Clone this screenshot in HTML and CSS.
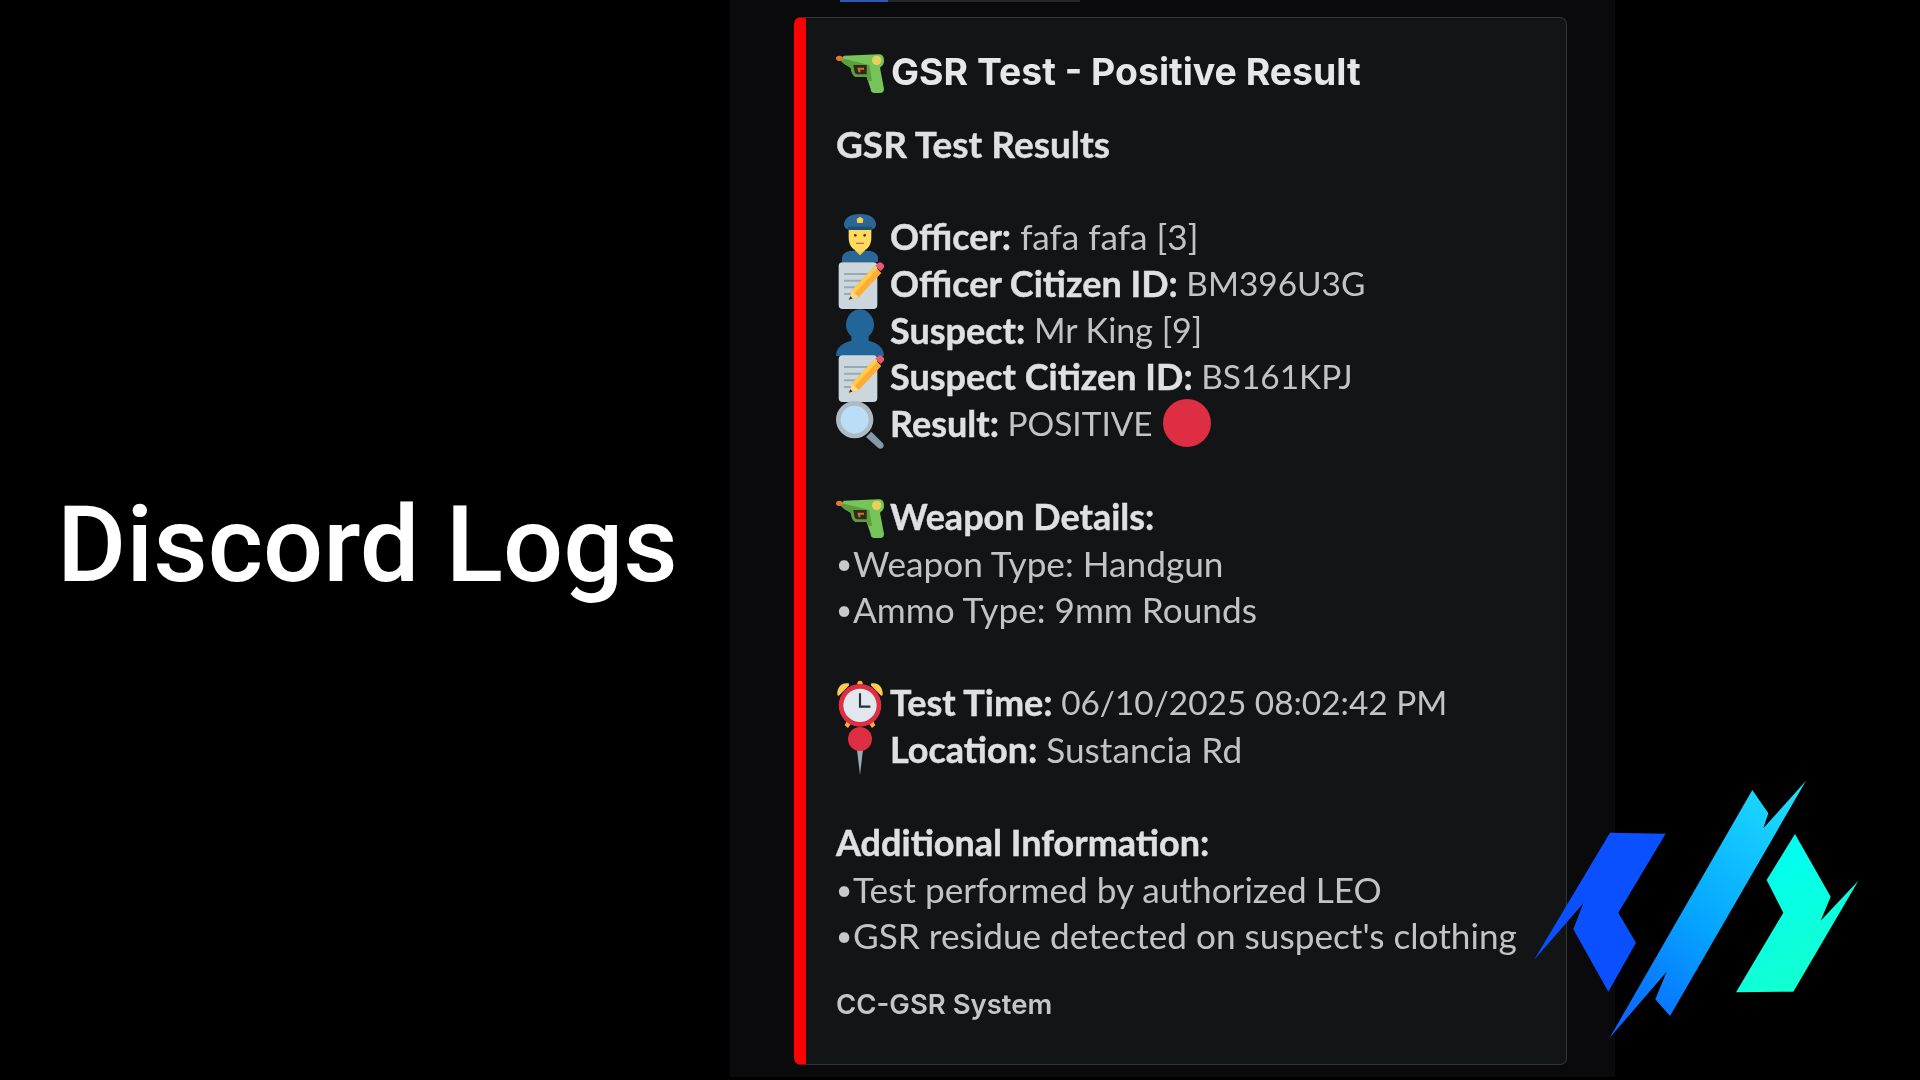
FILE: index.html
```html
<!DOCTYPE html>
<html lang="en">
<head>
<meta charset="utf-8">
<title>Discord Logs</title>
<link rel="stylesheet" href="styles.css">
</head>
<body>
<svg class="defs" width="0" height="0" aria-hidden="true">
  <symbol id="e-gun" viewBox="0 0 36 36">
    <path fill="#77c45a" d="M6 5L32 4C35 4 36 6 36 9C36 12 34 13 33 14L36 30C36 32 35 33 33 33L29 33C27 33 26 32 26 30L23 21L16 21C14 21 13 20 12 18L11 14L6 11L3 8Z"/>
    <path fill="#5c9e3b" d="M3 8L6 11L11 14L12 18C13 20 14 21 16 21L23 21L24 24L27 24L25 12L4 7Z"/>
    <ellipse cx="2.500" cy="7" rx="2.500" ry="2" fill="#e8762c"/>
    <circle cx="30.500" cy="8.500" r="3.500" fill="#e6d25a"/>
    <path fill="#33261c" d="M13 12h10v7h-7c-1 0-1.600-.5-2-1.500z"/>
    <path fill="#c9772b" d="M16 14h5v1.500h-3l.5 2H17z"/>
  </symbol>
  <symbol id="e-cop" viewBox="0 0 36 36">
    <path fill="#2a6797" d="M4.500 36v-3c0-3.500 4-5.500 8-5.500h11c4 0 8 2 8 5.500v3z"/>
    <path fill="#ffcc4d" d="M14 27l4 4 4-4z"/>
    <path fill="#ffdc5d" d="M9.500 9h17v9c0 6-3.800 10-8.500 10s-8.500-4-8.500-10z"/>
    <path fill="#c1694f" d="M15 21.500h6v1h-6z"/>
    <circle cx="14.500" cy="16" r="1" fill="#662113"/>
    <circle cx="21.500" cy="16" r="1" fill="#662113"/>
    <path fill="#2a6797" d="M18 0C10 0 6 3.500 6 8c0 2 2 3.500 3.500 3.500h17C28 11.500 30 10 30 8c0-4.500-4-8-12-8z"/>
    <rect x="9" y="9.500" width="18" height="2.500" fill="#1e4e73"/>
    <path fill="#ffcc4d" d="M18 2l2.500 1.800-.5 3h-4l-.5-3z"/>
  </symbol>
  <symbol id="e-memo" viewBox="0 0 36 36">
    <rect x="2" y="1" width="29" height="35" rx="3" fill="#ccd6dd"/>
    <path fill="#99aab5" d="M6 9h21v1.500H6zM6 14h21v1.500H6zM6 19h14v1.500H6zM6 24h9v1.500H6z"/>
    <path fill="#ffac33" d="M29 4l5 5-17 18-7 2 2-7z"/>
    <path fill="#ffcc4d" d="M29 4l2 2-17 18-2-2z"/>
    <path fill="#ea596e" d="M29.500 3.500l2-2c1-.8 2-.8 3 0l1 1c.8 1 .8 2 0 3l-2 2z"/>
    <path fill="#ffd983" d="M12 22l5 5-7 2z"/>
    <path fill="#292f33" d="M10.800 26.500l1.700 1.700-3 .9z"/>
  </symbol>
  <symbol id="e-bust" viewBox="0 0 36 36">
    <path fill="#226699" d="M24.500 24.500v-3.300c2.500-2 4-5.200 4-8.700C28.500 6.700 23.800 1 18 1S7.500 6.700 7.500 12.500c0 3.500 1.500 6.700 4 8.700v3.300C5 26 0 29.500 0 36h36c0-6.500-5-10-11.500-11.500z"/>
  </symbol>
  <symbol id="e-glass" viewBox="0 0 36 36">
    <path fill="#8899a6" d="M35 31.500c1 1.400 1 2.500 0 3.500s-2.100 1-3.500 0l-9-8 4-4z"/>
    <circle cx="14" cy="14" r="14" fill="#aebbc4"/>
    <circle cx="14" cy="14" r="10.500" fill="#bbddf5"/>
  </symbol>
  <symbol id="e-clock" viewBox="0 0 36 36">
    <path fill="#ffcc4d" d="M1 11C.5 6 4 1.500 9 2.500c1 .2 1.200 1.200.5 1.800L2.500 11.500c-.6.600-1.400.4-1.500-.5zM35 11c.5-5-3-9.500-8-8.500-1 .2-1.200 1.200-.5 1.800l7 7.200c.6.600 1.400.4 1.500-.5z"/>
    <circle cx="18" cy="2.500" r="2" fill="#ffac33"/>
    <path fill="#ffac33" d="M8 31l3 2-2 3-2.500-2zM28 31l-3 2 2 3 2.500-2z"/>
    <circle cx="18" cy="19" r="16" fill="#dd2e44"/>
    <circle cx="18" cy="19" r="12.500" fill="#e1e8ed"/>
    <path fill="#292f33" d="M17.200 10h1.600v9.200h7v1.600h-8.600z"/>
  </symbol>
  <symbol id="e-pin" viewBox="0 0 36 36">
    <path fill="#99aab5" d="M15.500 15h5L18 36z"/>
    <circle cx="18" cy="9" r="9" fill="#dd2e44"/>
  </symbol>
  <symbol id="e-red" viewBox="0 0 36 36">
    <circle cx="18" cy="18" r="18" fill="#dd2e44"/>
  </symbol>
</svg>

<main class="stage">
  <section class="intro">
    <h1 class="intro-title">Discord Logs</h1>
  </section>

  <section class="panel">
    <div class="strip"><span class="strip-blue"></span></div>
    <article class="card">
      <h2 class="card-title"><svg class="emoji"><use href="#e-gun"/></svg>GSR Test - Positive Result</h2>
      <div class="desc">
        <div class="group">
          <div class="line"><strong class="heading">GSR Test Results</strong></div>
        </div>
        <div class="group">
          <div class="line"><svg class="emoji"><use href="#e-cop"/></svg><strong>Officer:</strong> fafa fafa [3]</div>
          <div class="line"><svg class="emoji"><use href="#e-memo"/></svg><strong>Officer Citizen ID:</strong><span class="narrow"> BM396U3G</span></div>
          <div class="line"><svg class="emoji"><use href="#e-bust"/></svg><strong>Suspect:</strong><span class="name"> Mr King [9]</span></div>
          <div class="line"><svg class="emoji"><use href="#e-memo"/></svg><strong>Suspect Citizen ID:</strong><span class="narrow"> BS161KPJ</span></div>
          <div class="line"><svg class="emoji"><use href="#e-glass"/></svg><strong>Result:</strong><span class="narrow"> POSITIVE </span><svg class="emoji emoji-end"><use href="#e-red"/></svg></div>
        </div>
        <div class="group">
          <div class="line"><svg class="emoji"><use href="#e-gun"/></svg><strong>Weapon Details:</strong></div>
          <div class="line"><span class="bullet">•</span>Weapon Type: Handgun</div>
          <div class="line"><span class="bullet">•</span>Ammo Type: 9mm Rounds</div>
        </div>
        <div class="group">
          <div class="line"><svg class="emoji"><use href="#e-clock"/></svg><strong>Test Time:</strong><span class="narrow"> 06/10/2025 08:02:42 PM</span></div>
          <div class="line"><svg class="emoji"><use href="#e-pin"/></svg><strong>Location:</strong> Sustancia Rd</div>
        </div>
        <div class="group">
          <div class="line"><strong>Additional Information:</strong></div>
          <div class="line"><span class="bullet">•</span>Test performed by authorized LEO</div>
          <div class="line"><span class="bullet">•</span>GSR residue detected on suspect's clothing</div>
        </div>
      </div>
      <footer class="card-footer">CC-GSR System</footer>
    </article>
  </section>

  <svg class="logo" viewBox="0 0 1140 900" aria-label="Logo">
    <defs>
      <linearGradient id="logo-mid" x1="328" y1="835" x2="918" y2="62" gradientUnits="userSpaceOnUse">
        <stop offset="0" stop-color="#0b5cff"/>
        <stop offset="0.45" stop-color="#05a4ff"/>
        <stop offset="1" stop-color="#1fe4ff"/>
      </linearGradient>
      <linearGradient id="logo-right" x1="800" y1="300" x2="1000" y2="650" gradientUnits="userSpaceOnUse">
        <stop offset="0" stop-color="#00fff0"/>
        <stop offset="1" stop-color="#14ffcf"/>
      </linearGradient>
    </defs>
    <polygon fill="#0a50ff" points="102,600 330,218 497,221 355,458 408,548 325,695 220,508 250,430"/>
    <polygon fill="url(#logo-mid)" points="328,835 757,90 805,160 790,205 918,62 510,768 466,718 500,635"/>
    <polygon fill="url(#logo-right)" points="885,222 992,410 962,482 1075,362 880,695 708,697 850,458 800,360"/>
  </svg>
</main>
</body>
</html>
```
FILE: styles.css
```css
* { box-sizing: border-box; }

html, body {
  margin: 0;
  height: 100%;
  background: #000;
}

.defs { position: absolute; }

.stage {
  position: relative;
  display: flex;
  width: 1920px;
  height: 1080px;
  overflow: hidden;
  background: #000;
}

.intro {
  display: flex;
  align-items: center;
  width: 730px;
  height: 1080px;
  padding: 10px 0 0 57px;
}

.intro-title {
  margin: 0;
  font-family: Roboto, "Liberation Sans", sans-serif;
  font-size: 106px;
  font-weight: 500;
  color: #fff;
  white-space: nowrap;
}

.panel {
  width: 885px;
  height: 1077px;
  padding: 0 0 0 64px;
  background: #0a0a0c;
}

.strip {
  width: 240px;
  height: 2px;
  margin: 0 0 15px 46px;
  background: #26272b;
}

.strip-blue {
  display: block;
  width: 48px;
  height: 2px;
  background: #2a5cb0;
}

.card {
  width: 773px;
  padding: 29px 0 40px 30px;
  background: #131416;
  border: 1.5px solid #34353a;
  border-left: 12px solid #fe0000;
  border-radius: 7px;
  filter: blur(0.6px);
}

.card-title {
  display: flex;
  align-items: center;
  height: 48px;
  margin: 0 0 25px;
  font-family: Inter, "Noto Sans", sans-serif;
  font-size: 37.4px;
  font-weight: 700;
  color: #e6e7e9;
  white-space: nowrap;
}

.card-title .emoji { margin-right: 7px; }

.desc {
  font-family: Lato, "Noto Sans", sans-serif;
  font-size: 35.2px;
  color: #c2c3c6;
}

.group + .group { margin-top: 46.6px; }

.line {
  display: flex;
  align-items: center;
  height: 46.6px;
  white-space: pre;
}

.line strong {
  font-size: 36px;
  font-weight: 700;
  color: #dfe0e2;
  -webkit-text-stroke: 0.4px #dfe0e2;
}

.line .heading { font-size: 37px; }

.narrow { font-size: 33.4px; }

.name { font-size: 34px; }

.bullet {
  flex: none;
  width: 17px;
  font-size: 28px;
  color: #c8c9cc;
}

.emoji {
  flex: none;
  width: 48px;
  height: 48px;
  margin-right: 6px;
  transform: translateY(2px);
}

.emoji-end { margin: 0 0 0 2px; transform: none; }

.card-footer {
  height: 40px;
  margin-top: 25px;
  font-family: Inter, "Noto Sans", sans-serif;
  font-size: 27.5px;
  font-weight: 600;
  line-height: 40px;
  color: #c4c5c8;
}

.logo {
  position: absolute;
  left: 1500px;
  top: 760px;
  width: 380px;
  height: 300px;
}
```
